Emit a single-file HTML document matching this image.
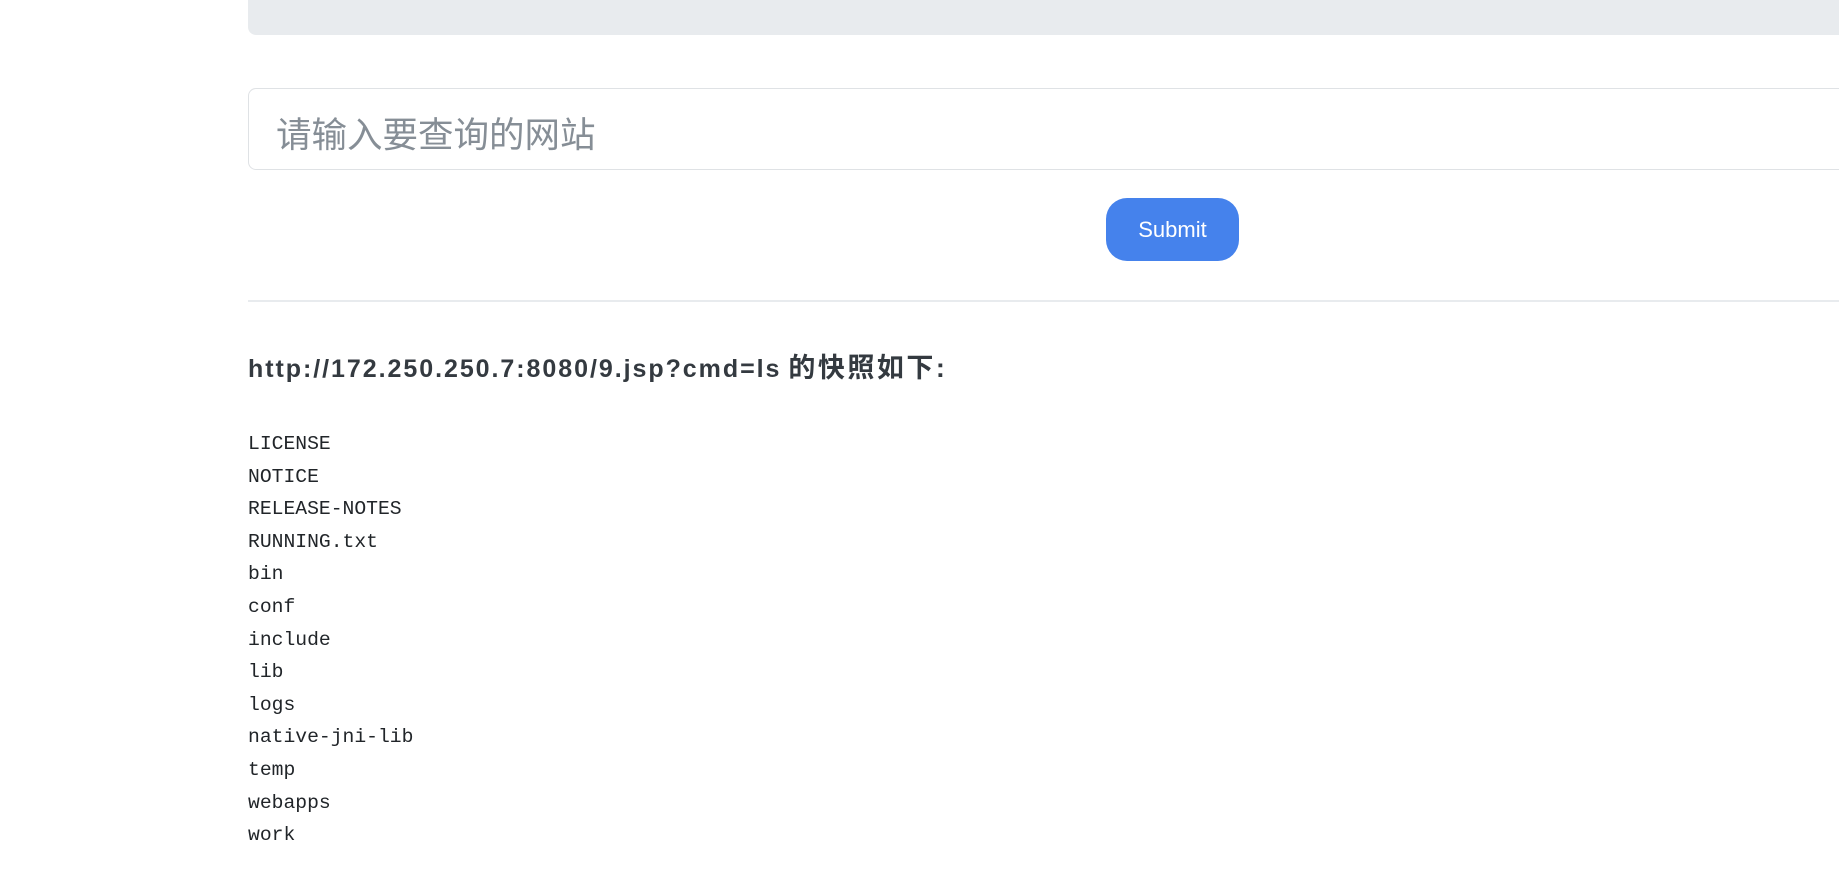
<!DOCTYPE html>
<html><head><meta charset="utf-8"><style>
html,body{margin:0;padding:0;background:#fff;width:1839px;height:869px;overflow:hidden;}
body{position:relative;font-family:"Liberation Sans","Noto Sans CJK SC",sans-serif;}
.bar{position:absolute;left:248px;top:-10px;width:1700px;height:45px;background:#e8ebee;border-radius:0 0 8px 8px;}
.inp{position:absolute;left:248px;top:88px;width:1700px;height:82px;box-sizing:border-box;border:1px solid #dfe2e5;border-radius:8px;}
.ph{position:absolute;left:276px;top:111px;font-size:35.5px;line-height:44px;color:#868e96;font-family:"Noto Sans CJK SC",sans-serif;}
.btn{position:absolute;left:1106px;top:198px;width:133px;height:63px;background:#4582ec;border-radius:21px;color:#fff;font-size:22px;line-height:63px;text-align:center;}
.hr{position:absolute;left:248px;top:300px;width:1700px;height:2px;background:#e8ebee;}
.h{position:absolute;left:248px;top:352px;font-size:25px;line-height:32px;font-weight:bold;color:#343a40;white-space:nowrap;}
.h .l{letter-spacing:1.95px;}
.h .c{font-size:27px;letter-spacing:2.5px;}
pre{position:absolute;left:248px;top:428px;margin:0;font-family:"Liberation Mono","DejaVu Sans Mono",monospace;font-size:19.7px;line-height:32.6px;color:#212529;}
</style></head><body>
<div class="bar"></div>
<div class="inp"></div>
<div class="ph">请输入要查询的网站</div>
<div class="btn">Submit</div>
<div class="hr"></div>
<div class="h"><span class="l">http://172.250.250.7:8080/9.jsp?cmd=ls</span> <span class="c">的快照如下:</span></div>
<pre>LICENSE
NOTICE
RELEASE-NOTES
RUNNING.txt
bin
conf
include
lib
logs
native-jni-lib
temp
webapps
work</pre>
</body></html>
